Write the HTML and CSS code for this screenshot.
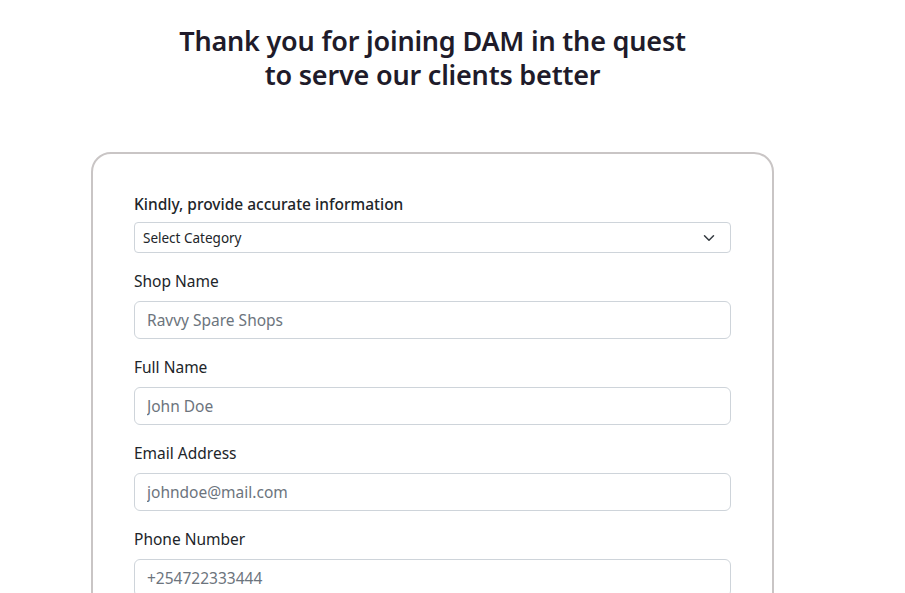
FILE: index.html
```html
<!DOCTYPE html>
<html lang="en">
<head>
<meta charset="utf-8">
<title>Join DAM</title>
<link rel="stylesheet" href="styles.css">
</head>
<body>
<div class="page">
  <h1 class="title">Thank you for joining DAM in the quest<br>to serve our clients better</h1>
  <form class="card">
    <div class="group first">
      <label class="label strong" for="cat">Kindly, provide accurate information</label>
      <div class="select">
        <span>Select Category</span>
        <svg class="chev" width="16" height="12" viewBox="0 0 16 16"><path d="m2 5 6 6 6-6" fill="none" stroke="#343a40" stroke-width="2" stroke-linecap="round" stroke-linejoin="round"/></svg>
      </div>
    </div>
    <div class="group">
      <label class="label">Shop Name</label>
      <input class="input" placeholder="Ravvy Spare Shops">
    </div>
    <div class="group">
      <label class="label">Full Name</label>
      <input class="input" placeholder="John Doe">
    </div>
    <div class="group">
      <label class="label">Email Address</label>
      <input class="input" placeholder="johndoe@mail.com">
    </div>
    <div class="group">
      <label class="label">Phone Number</label>
      <input class="input" placeholder="+254722333444">
    </div>
  </form>
</div>
</body>
</html>
```

FILE: styles.css
```css
* { box-sizing: border-box; }
html, body { margin: 0; padding: 0; background: #fff; }
body {
  font-family: "Noto Sans", "Open Sans", sans-serif;
  color: #212529;
  overflow: hidden;
}
.page {
  width: 865px;
  padding-top: 24px;
}
.title {
  margin: 0;
  text-align: center;
  font-size: 27px;
  line-height: 34px;
  font-weight: 600;
  color: #201b2a;
  letter-spacing: -0.2px;
}
.card {
  display: block;
  width: 683px;
  margin: 60px auto 0;
  border: 2px solid #c9c5c5;
  border-radius: 20px;
  padding: 40px 41px 40px 41px;
}
.group { display: flex; flex-direction: column; margin-bottom: 16px; }
.label {
  font-size: 15.5px;
  line-height: 24px;
  margin-bottom: 8px;
  color: #212529;
}
.group.first .label { margin-bottom: 8px; line-height: 20px; }
.label.strong { font-weight: 500; }
.select {
  height: 31px;
  border: 1px solid #ced4da;
  border-radius: 4px;
  display: flex;
  align-items: center;
  justify-content: space-between;
  padding: 0 13px 0 8px;
  font-size: 13.5px;
  color: #212529;
}
.chev { display: block; }
.input {
  height: 38px;
  border: 1px solid #ced4da;
  border-radius: 6px;
  padding: 0 12px;
  font-family: inherit;
  font-size: 15.5px;
  color: #212529;
  background: #fff;
  outline: none;
}
.input::placeholder { color: #6c747d; opacity: 1; }
```
